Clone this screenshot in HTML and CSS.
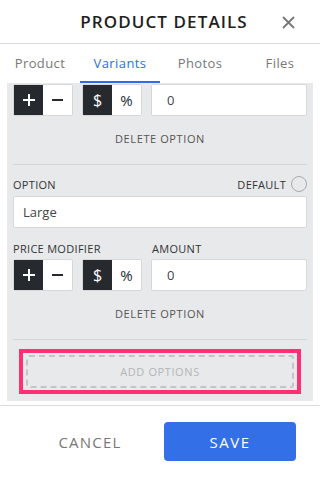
FILE: index.html
```html
<!DOCTYPE html>
<html lang="en">
<head>
    <meta charset="UTF-8">
    <meta name="viewport" content="width=device-width, initial-scale=1.0">
    <title>Product Details</title>
    <link rel="stylesheet" href="styles.css">
</head>
<body>
    <div class="header">
        <div class="title">PRODUCT DETAILS</div>
        <button class="close">
            <svg width="13" height="13" viewBox="0 0 13 13"><path d="M1 1L12 12M12 1L1 12" stroke="#777" stroke-width="1.8"/></svg>
        </button>
    </div>

    <div class="tabs">
        <div class="tab">Product</div>
        <div class="tab active">Variants</div>
        <div class="tab">Photos</div>
        <div class="tab">Files</div>
    </div>

    <div class="content">
        <div class="panel">
            <div class="price-row">
                <div class="toggle">
                    <span class="dark"><svg width="12" height="12" viewBox="0 0 12 12"><path d="M6 0V12M0 6H12" stroke="white" stroke-width="2"/></svg></span>
                    <span><svg width="11" height="12" viewBox="0 0 11 12"><path d="M0 6H11" stroke="#262a2f" stroke-width="2"/></svg></span>
                </div>
                <div class="toggle">
                    <span class="dark">$</span>
                    <span>%</span>
                </div>
                <div class="field">0</div>
            </div>
            <div class="delete">DELETE OPTION</div>

            <div class="option">
                <div class="label-row">
                    <span class="label">OPTION</span>
                    <span class="label">DEFAULT <span class="radio"></span></span>
                </div>
                <div class="field wide">Large</div>
                <div class="label-row two">
                    <span class="label">PRICE MODIFIER</span>
                    <span class="label">AMOUNT</span>
                </div>
                <div class="price-row">
                    <div class="toggle">
                        <span class="dark"><svg width="12" height="12" viewBox="0 0 12 12"><path d="M6 0V12M0 6H12" stroke="white" stroke-width="2"/></svg></span>
                        <span><svg width="11" height="12" viewBox="0 0 11 12"><path d="M0 6H11" stroke="#262a2f" stroke-width="2"/></svg></span>
                    </div>
                    <div class="toggle">
                        <span class="dark">$</span>
                        <span>%</span>
                    </div>
                    <div class="field">0</div>
                </div>
                <div class="delete">DELETE OPTION</div>
            </div>

            <div class="add-wrap">
                <div class="add">ADD OPTIONS</div>
            </div>
        </div>
    </div>

    <div class="footer">
        <button class="cancel">CANCEL</button>
        <button class="save">SAVE</button>
    </div>
</body>
</html>
```

FILE: styles.css
```css
body {
    font-family: "Open Sans", sans-serif;
    margin: 0;
    padding: 0;
    background-color: white;
    color: #333;
    overflow: hidden;
}

button {
    font-family: inherit;
    border: none;
    background: none;
    padding: 0;
    cursor: pointer;
}

.header {
    height: 43px;
    border-bottom: 1px solid #dcdcdc;
    display: flex;
    align-items: center;
    justify-content: center;
    position: relative;
}

.title {
    font-size: 17px;
    font-weight: 600;
    letter-spacing: 1.1px;
    color: #1e1e1e;
    margin-left: 8px;
}

.close {
    position: absolute;
    right: 25px;
    top: 15px;
    width: 13px;
    height: 13px;
}

.tabs {
    display: grid;
    grid-template-columns: repeat(4, 1fr);
    height: 39px;
}

.tab {
    display: flex;
    align-items: center;
    justify-content: center;
    font-size: 13px;
    letter-spacing: 0.4px;
    color: #777;
    border-bottom: 2px solid transparent;
}

.tab.active {
    color: #2f6de2;
    border-bottom-color: #2f6de2;
}

.content {
    height: 322px;
    border-bottom: 1px solid #dcdcdc;
}

.panel {
    background-color: #e8e9eb;
    margin: 0 7px;
    padding: 1px 6px 7px;
}

.price-row {
    display: grid;
    grid-template-columns: 60px 60px 1fr;
    column-gap: 9px;
    height: 32px;
}

.toggle {
    display: grid;
    grid-template-columns: 1fr 1fr;
    background: white;
    border: 1px solid #d6d7d9;
    border-radius: 2px;
}

.toggle span {
    display: flex;
    align-items: center;
    justify-content: center;
    font-size: 15px;
    color: #262a2f;
}

.toggle .dark {
    background-color: #262a2f;
    color: white;
    font-size: 16px;
}

.field {
    background: white;
    border: 1px solid #d6d7d9;
    border-radius: 2px;
    display: flex;
    align-items: center;
    padding-left: 15px;
    font-size: 13px;
    color: #444;
}

.field.wide {
    height: 30px;
    margin-top: 4px;
    padding-left: 9px;
}

.delete {
    text-align: center;
    font-size: 11px;
    letter-spacing: 0.6px;
    line-height: 14px;
    color: #555;
    padding: 16px 0 18px;
}

.option {
    border-top: 1px solid #d4d5d7;
    padding-top: 11px;
    border-bottom: 1px solid #d4d5d7;
}

.label-row {
    display: flex;
    justify-content: space-between;
    align-items: center;
    height: 16px;
}

.label-row.two {
    justify-content: flex-start;
    margin: 12px 0 3px;
}

.label-row.two .label:first-child {
    width: 139px;
}

.label {
    font-size: 11px;
    letter-spacing: 0.3px;
    color: #333;
    display: flex;
    align-items: center;
}

.radio {
    width: 14px;
    height: 14px;
    border: 1.5px solid #aaa;
    border-radius: 50%;
    margin-left: 5px;
}

.add-wrap {
    margin: 9px 6px 0;
    border: 4px solid #ff2f74;
    padding: 2px 3px;
}

.add {
    height: 29px;
    border: 2px dashed #c4c5c7;
    border-radius: 3px;
    display: flex;
    align-items: center;
    justify-content: center;
    font-size: 11px;
    letter-spacing: 0.6px;
    color: #b4b5b7;
}

.footer {
    display: grid;
    grid-template-columns: 1fr 132px;
    column-gap: 8px;
    padding: 16px 24px;
}

.cancel {
    font-size: 15px;
    letter-spacing: 1.2px;
    color: #777;
    height: 39px;
}

.save {
    height: 39px;
    background-color: #3370e8;
    color: white;
    border-radius: 4px;
    font-size: 15px;
    letter-spacing: 1.5px;
}
```
